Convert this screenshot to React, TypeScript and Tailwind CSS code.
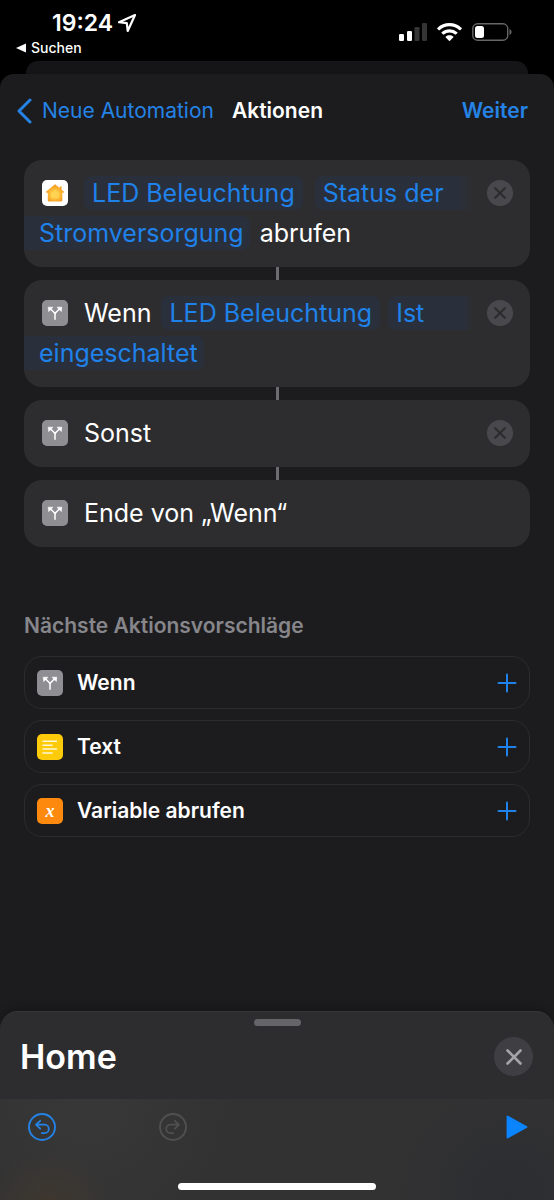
import type { ReactNode } from "react";

type IconName = "home" | "branch" | "text" | "variable";

interface Suggestion {
  icon: IconName;
  label: string;
}

const SUGGESTIONS: Suggestion[] = [
  { icon: "branch", label: "Wenn" },
  { icon: "text", label: "Text" },
  { icon: "variable", label: "Variable abrufen" },
];

const TILE_COLORS: Record<IconName, string> = {
  home: "bg-white",
  branch: "bg-[#8e8e93]",
  text: "bg-[#fecb0a]",
  variable: "bg-[#fd8a0e]",
};

function Glyph({ name }: { name: IconName }) {
  switch (name) {
    case "home":
      return (
        <svg viewBox="0 0 26 26" className="size-full" aria-hidden="true">
          <defs>
            <radialGradient id="house" cx="50%" cy="58%" r="60%">
              <stop offset="0" stopColor="#ffd75c" />
              <stop offset="0.4" stopColor="#fdc13c" />
              <stop offset="1" stopColor="#f2901c" />
            </radialGradient>
          </defs>
          <path
            d="M13 4.2 17.6 8V6.4h2v3.3l2.7 2.2-.7.9h-1.3v7.4a1.2 1.2 0 0 1-1.2 1.2H7a1.2 1.2 0 0 1-1.2-1.2v-7.4H4.4l-.7-.9z"
            fill="url(#house)"
          />
          <path d="M13 9.6 17 12.9v5.3H9v-5.3z" fill="#ffd452" opacity="0.8" />
        </svg>
      );
    case "branch":
      return (
        <svg viewBox="0 0 26 26" className="size-full" fill="none" aria-hidden="true">
          <path
            d="M13 19.2v-4.6c0-1-.4-1.6-1.1-2.3L8.4 8.8M13 14.6c0-1 .4-1.6 1.1-2.3l3.5-3.5"
            stroke="#fff"
            strokeWidth="1.5"
            strokeLinecap="round"
          />
          <path
            d="M6.200 7.200h4.800L6.700 11.600zM19.800 7.200H15l4.300 4.400z"
            fill="#fff"
            stroke="#fff"
            strokeWidth="0.6"
            strokeLinejoin="round"
          />
        </svg>
      );
    case "text":
      return (
        <svg viewBox="0 0 26 26" className="size-full" aria-hidden="true">
          <path
            d="M6 7.3h13.5M6 11.2h9M6 15h13.5M6 18.9h9"
            stroke="#fff8d8"
            strokeWidth="1.5"
            strokeLinecap="round"
          />
        </svg>
      );
    case "variable":
      return <span className="font-['Liberation_Serif',serif] text-[18px] leading-[22px] font-bold text-white italic">x</span>;
  }
}

function Tile({ name }: { name: IconName }) {
  return (
    <span className={`flex size-[26px] shrink-0 items-center justify-center rounded-[5px] ${TILE_COLORS[name]}`}>
      <Glyph name={name} />
    </span>
  );
}

function Token({ children }: { children: ReactNode }) {
  return (
    <button type="button" className="h-[34px] shrink-0 rounded-lg bg-[#2a303b] px-2 whitespace-nowrap text-[#1f82ea]">
      {children}
    </button>
  );
}

// First half of a token that wraps: it runs out towards the remove button.
function TokenStart({ children }: { children: ReactNode }) {
  return (
    <button
      type="button"
      className="h-[34px] min-w-0 flex-1 rounded-l-lg bg-linear-to-r from-[#2a303b] from-90% to-[#2d2d2f] px-2 text-left whitespace-nowrap text-[#1f82ea]"
    >
      {children}
    </button>
  );
}

function TokenEnd({ children }: { children: ReactNode }) {
  return (
    <button type="button" className="h-[34px] rounded-r-lg bg-[#2a303b] pr-[6px] pl-[15px] whitespace-nowrap text-[#1f82ea]">
      {children}
    </button>
  );
}

interface CardProps {
  icon: IconName;
  removable?: boolean;
  secondLine?: ReactNode;
  children: ReactNode;
}

function ActionCard({ icon, removable = true, secondLine, children }: CardProps) {
  return (
    <li className="group flex flex-col items-center">
      <div className="w-full overflow-hidden rounded-[18px] bg-[#2d2d2f] pt-[13px] pb-[14px] text-[25px] leading-[34px]">
        <div className="flex h-10 items-center pr-[17px] pl-[18px]">
          <Tile name={icon} />
          <div className="ml-4 flex min-w-0 flex-1 items-center">{children}</div>
          {removable && (
            <button
              type="button"
              aria-label="Entfernen"
              className="ml-[14px] flex size-[26px] shrink-0 items-center justify-center rounded-full bg-[#49494d]"
            >
              <svg viewBox="0 0 12 12" className="size-3" aria-hidden="true">
                <path d="m1.2 1.2 9.6 9.6m0-9.6-9.6 9.6" stroke="#2b2b2d" strokeWidth="2" strokeLinecap="round" />
              </svg>
            </button>
          )}
        </div>
        {secondLine && <div className="flex h-10 items-center">{secondLine}</div>}
      </div>
      <span className="h-[13px] w-[3px] bg-[#6b6b70] group-last:hidden" />
    </li>
  );
}

function StatusBar() {
  return (
    <div className="flex h-[61px] items-start justify-between pr-[42px] pl-4">
      <div>
        <div className="flex items-center gap-1 pt-2 pl-9">
          <span className="text-[23px] leading-[30px] font-semibold">19:24</span>
          <svg viewBox="0 0 20 20" className="size-5" fill="none" aria-hidden="true">
            <path d="M18 2 2 9.2l7.8.9.9 7.9z" stroke="#fff" strokeWidth="2.2" strokeLinejoin="round" />
          </svg>
        </div>
        <a href="#suchen" className="flex items-center gap-[5px] text-[14px] leading-5 font-medium">
          <svg viewBox="0 0 10 10" className="size-[10px]" aria-hidden="true">
            <path d="M0 5 10 .5v9z" fill="#fff" />
          </svg>
          Suchen
        </a>
      </div>
      <div className="mt-[23px] flex h-[18px] items-center gap-[10px]">
        <svg viewBox="0 0 28 18" className="h-[18px] w-7" aria-hidden="true">
          <rect x="0" y="11" width="5" height="7" rx="1.3" fill="#fff" />
          <rect x="8" y="8" width="5" height="10" rx="1.3" fill="#fff" />
          <rect x="15.5" y="4" width="5" height="14" rx="1.3" fill="#353535" />
          <rect x="23" y="0" width="5" height="18" rx="1.3" fill="#353535" />
        </svg>
        <svg viewBox="0 0 25 18" className="h-[18px] w-[25px]" fill="#fff" aria-hidden="true">
          <path d="M12.5 0C7.7 0 3.4 1.9.3 4.900c-.3.3-.3.6 0 .8l1.500 1.500c.2.2.5.2.8 0a14.300 14.300 0 0 1 19.800 0c.3.2.6.2.8 0l1.500-1.500c.3-.2.3-.5 0-.8A17.600 17.600 0 0 0 12.500 0z" />
          <path d="M12.500 6.200c-3 0-5.800 1.200-7.900 3.100-.3.2-.3.6 0 .8l1.500 1.500c.2.2.5.2.8 0a8.300 8.300 0 0 1 11.200 0c.3.2.6.2.8 0l1.500-1.500c.3-.2.3-.6 0-.8a11.600 11.600 0 0 0-7.900-3.100z" />
          <path d="M12.500 12.200c-1.400 0-2.700.5-3.700 1.300-.3.3-.3.6 0 .9l3.200 3.300c.3.3.7.3 1 0l3.200-3.300c.3-.3.3-.6 0-.9-1-.8-2.300-1.300-3.700-1.300z" />
        </svg>
        <svg viewBox="0 0 40 18" className="h-[18px] w-10" fill="none" aria-hidden="true">
          <rect x=".8" y=".8" width="34.9" height="16.4" rx="4.8" stroke="#666" strokeWidth="1.4" />
          <rect x="3" y="3" width="9" height="12" rx="2.5" fill="#fff" />
          <path d="M37.5 6v6c1.2-.4 2-1.700 2-3s-.8-2.600-2-3z" fill="#666" />
        </svg>
      </div>
    </div>
  );
}

function Header() {
  return (
    <header className="flex h-[73px] items-center pr-[26px] pl-4 text-[21px]">
      <a href="#zurueck" className="flex items-center gap-[10px] text-[#2583e6]">
        <svg viewBox="0 0 16 26" className="h-[26px] w-4" fill="none" aria-hidden="true">
          <path d="M14 2 3 13l11 11" stroke="currentColor" strokeWidth="3" strokeLinecap="round" strokeLinejoin="round" />
        </svg>
        Neue Automation
      </a>
      <h1 className="ml-[18px] font-semibold">Aktionen</h1>
      <button type="button" className="ml-auto font-semibold text-[#2583e6]">
        Weiter
      </button>
    </header>
  );
}

function CurveArrow() {
  return (
    <path
      d="M12.2 7.800 8 11.700l4.200 3.900M8.300 11.700h8.300a4.200 4.200 0 0 1 0 8.400h-2.800"
      stroke="currentColor"
      strokeWidth="1.8"
      strokeLinecap="round"
      strokeLinejoin="round"
    />
  );
}

function BottomPanel() {
  return (
    <footer className="rounded-t-[18px] border-t border-[#363638] bg-[#2d2d2f] shadow-[0_-2px_10px_rgba(0,0,0,0.25)]">
      <div className="flex justify-center pt-[7px]">
        <span className="h-[7px] w-[47px] rounded-full bg-[#656469]" />
      </div>
      <div className="flex h-[73px] items-center justify-between pr-[21px] pb-3 pl-5">
        <h2 className="text-[34px] leading-10 font-semibold">Home</h2>
        <button type="button" aria-label="Schließen" className="flex size-[39px] items-center justify-center rounded-full bg-[#3f3e43]">
          <svg viewBox="0 0 16 16" className="size-4" aria-hidden="true">
            <path d="m1.500 1.500 13 13m0-13-13 13" stroke="#a5a4aa" strokeWidth="2.6" strokeLinecap="round" />
          </svg>
        </button>
      </div>
      <div className="bg-[#323233] bg-[radial-gradient(circle_at_9%_115%,#40382e_0%,transparent_13%),radial-gradient(circle_at_92%_95%,#2c2d31_0%,transparent_22%),radial-gradient(circle_at_16%_0%,#383839_0%,transparent_30%)]">
        <div className="flex h-14 items-center pr-[26px] pl-7">
          <button type="button" aria-label="Widerrufen" className="text-[#2583e6]">
            <svg viewBox="0 0 28 28" className="size-7" fill="none" aria-hidden="true">
              <circle cx="14" cy="14" r="13" stroke="currentColor" strokeWidth="1.9" />
              <CurveArrow />
            </svg>
          </button>
          <button type="button" aria-label="Wiederholen" disabled className="ml-[103px] text-[#505051]">
            <svg viewBox="0 0 28 28" className="size-7 -scale-x-100" fill="none" aria-hidden="true">
              <circle cx="14" cy="14" r="13" stroke="currentColor" strokeWidth="1.9" />
              <CurveArrow />
            </svg>
          </button>
          <button type="button" aria-label="Ausführen" className="ml-auto text-[#0a84ff]">
            <svg viewBox="0 0 22 24" className="h-6 w-[22px]" aria-hidden="true">
              <path d="M1.500 1.500v21l19-10.500z" fill="currentColor" stroke="currentColor" strokeWidth="1.8" strokeLinejoin="round" />
            </svg>
          </button>
        </div>
        <div className="flex h-[45px] items-end justify-center pb-[10px]">
          <span className="h-[7px] w-[198px] rounded-full bg-white" />
        </div>
      </div>
    </footer>
  );
}

export default function App() {
  return (
    <div className="flex min-h-screen flex-col bg-black font-[Inter,sans-serif] text-white">
      <StatusBar />
      <div className="mx-[26px] h-[13px] rounded-t-xl bg-[#151517]" />
      <div className="flex flex-1 flex-col rounded-t-[14px] bg-[#1c1c1e]">
        <Header />
        <main className="flex-1 px-6 pt-[13px] pb-8">
          <ul>
            <ActionCard
              icon="home"
              secondLine={
                <>
                  <TokenEnd>Stromversorgung</TokenEnd>
                  <span className="ml-[10px]">abrufen</span>
                </>
              }
            >
              <Token>LED Beleuchtung</Token>
              <span className="w-3 shrink-0" />
              <TokenStart>Status der</TokenStart>
            </ActionCard>
            <ActionCard icon="branch" secondLine={<TokenEnd>eingeschaltet</TokenEnd>}>
              <span className="mr-[10px]">Wenn</span>
              <Token>LED Beleuchtung</Token>
              <span className="w-2 shrink-0" />
              <TokenStart>Ist</TokenStart>
            </ActionCard>
            <ActionCard icon="branch">Sonst</ActionCard>
            <ActionCard icon="branch" removable={false}>
              Ende von „Wenn“
            </ActionCard>
          </ul>

          <h2 className="mt-16 text-[21px] leading-[30px] font-semibold text-[#86868b]">Nächste Aktionsvorschläge</h2>
          <ul className="mt-[15px] space-y-[11px]">
            {SUGGESTIONS.map((s) => (
              <li key={s.label}>
                <button
                  type="button"
                  className="flex h-[53px] w-full items-center rounded-[18px] border border-[#2c2c2f] px-3 text-[21px] font-semibold"
                >
                  <Tile name={s.icon} />
                  <span className="ml-[14px]">{s.label}</span>
                  <svg viewBox="0 0 20 20" className="ml-auto size-5" aria-hidden="true">
                    <path d="M10 1.500v17M1.500 10h17" stroke="#1f82ea" strokeWidth="2" strokeLinecap="round" />
                  </svg>
                </button>
              </li>
            ))}
          </ul>
        </main>
        <BottomPanel />
      </div>
    </div>
  );
}
